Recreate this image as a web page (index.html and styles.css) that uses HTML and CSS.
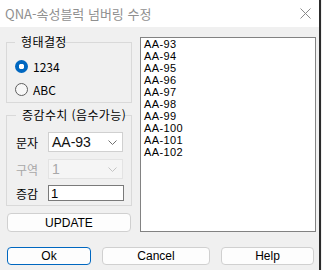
FILE: index.html
```html
<!DOCTYPE html>
<html lang="ko">
<head>
  <meta charset="UTF-8" />
  <title>QNA-속성블럭 넘버링 수정</title>
  <link rel="stylesheet" href="styles.css">
</head>
<body>
  <div class="window">
    <div class="titlebar">
      <span class="title">QNA-속성블럭 넘버링 수정</span>
      <svg class="close" viewBox="0 0 11 11">
        <path d="M0.5 0.5 L10.5 10.5 M10.5 0.5 L0.5 10.5" stroke="#8a8a8a" stroke-width="1" fill="none"/>
      </svg>
    </div>

    <div class="main">
      <div class="left">
        <fieldset class="group group-type">
          <legend>형태결정</legend>
          <div class="radio-row">
            <span class="radio checked"></span>
            <span class="radio-label">1234</span>
          </div>
          <div class="radio-row">
            <span class="radio"></span>
            <span class="radio-label">ABC</span>
          </div>
        </fieldset>

        <fieldset class="group group-step">
          <legend>증감수치 (음수가능)</legend>
          <div class="field-row">
            <span class="field-label">문자</span>
            <div class="combo">
              <span class="combo-text">AA-93</span>
              <svg class="chevron" viewBox="0 0 9 5">
                <path d="M0.5 0.5 L4.5 4.5 L8.5 0.5" stroke="#707070" stroke-width="1" fill="none"/>
              </svg>
            </div>
          </div>
          <div class="field-row">
            <span class="field-label disabled">구역</span>
            <div class="combo combo-disabled">
              <span class="combo-text">1</span>
              <svg class="chevron" viewBox="0 0 9 5">
                <path d="M0.5 0.5 L4.5 4.5 L8.5 0.5" stroke="#c4c4c4" stroke-width="1" fill="none"/>
              </svg>
            </div>
          </div>
          <div class="field-row field-row-last">
            <span class="field-label">증감</span>
            <input class="text-input" type="text" value="1">
          </div>
        </fieldset>

        <button class="btn btn-update">UPDATE</button>
      </div>

      <div class="listbox">
        <div class="item">AA-93</div>
        <div class="item">AA-94</div>
        <div class="item">AA-95</div>
        <div class="item">AA-96</div>
        <div class="item">AA-97</div>
        <div class="item">AA-98</div>
        <div class="item">AA-99</div>
        <div class="item">AA-100</div>
        <div class="item">AA-101</div>
        <div class="item">AA-102</div>
      </div>
    </div>

    <div class="actions">
      <button class="btn btn-ok">Ok</button>
      <button class="btn btn-cancel">Cancel</button>
      <button class="btn btn-help">Help</button>
    </div>
  </div>
</body>
</html>
```

FILE: styles.css
```css
body {
  margin: 0;
  background: #f0f0f0;
  font-family: "Noto Sans CJK KR", "Noto Sans", sans-serif;
  color: #000;
  overflow: hidden;
}

.window {
  width: 319px;
  height: 270px;
  background: #f0f0f0;
  border-right: 2px solid #2b2b2b;
  display: flex;
  flex-direction: column;
}

.titlebar {
  height: 27px;
  background: #fff;
  display: flex;
  align-items: center;
  justify-content: space-between;
  padding: 0 8px 0 5px;
  flex-shrink: 0;
}

.title {
  font-size: 13px;
  color: #8f8f8f;
  line-height: 27px;
}

.close {
  width: 11px;
  height: 11px;
}

.main {
  display: flex;
  align-items: flex-start;
  padding: 8px 0 0 6px;
}

.left {
  width: 126px;
  display: flex;
  flex-direction: column;
}

.group {
  margin: 0;
  border: 1px solid #d9d9d9;
  padding: 0;
  min-width: 0;
}

.group legend {
  font-size: 12px;
  line-height: 14px;
  letter-spacing: 0.4px;
  white-space: nowrap;
  padding: 0 2px;
  position: relative;
  left: 4px;
}

.group-type {
  padding: 6px 0 1px 8px;
}

.radio-row {
  height: 23px;
  display: flex;
  align-items: center;
  gap: 5px;
}

.radio {
  width: 11px;
  height: 11px;
  border: 1px solid #5f5f5f;
  border-radius: 50%;
  background: #f7f7f7;
}

.radio.checked {
  width: 13px;
  height: 13px;
  border: none;
  background: radial-gradient(circle, #fff 0 2.6px, #0067c0 3px);
}

.radio-label {
  font-size: 12px;
}

.group-step {
  margin-top: 5px;
  padding: 10px 0 4px 9px;
}

.field-row {
  display: flex;
  align-items: center;
  height: 20px;
  margin-bottom: 7px;
}

.field-row + .field-row + .field-row {
  margin-top: -1px;
}

.field-row-last {
  height: 16px;
  margin-bottom: 0;
}

.field-label {
  width: 32px;
  font-size: 12px;
}

.field-label.disabled {
  color: #a8a8a8;
}

.combo {
  width: 75px;
  height: 20px;
  box-sizing: border-box;
  border: 1px solid #d0d0d0;
  background: #fff;
  display: flex;
  align-items: center;
  justify-content: space-between;
  padding: 0 5px 0 3px;
}

.combo-text {
  font-family: "Liberation Sans", Arial, sans-serif;
  font-size: 14px;
  color: #111;
}

.combo-disabled {
  background: #f5f5f5;
  border-color: #e3e3e3;
}

.combo-disabled .combo-text {
  color: #a8a8a8;
}

.chevron {
  width: 9px;
  height: 5px;
}

.text-input {
  width: 76px;
  height: 16px;
  box-sizing: border-box;
  border: 1px solid #7a7a7a;
  background: #fff;
  margin: 0;
  padding: 0 2px;
  font-family: "Liberation Sans", Arial, sans-serif;
  font-size: 13px;
  outline: none;
}

.btn {
  font-family: "Liberation Sans", Arial, sans-serif;
  font-size: 12px;
  color: #000;
  background: #fdfdfd;
  border: 1px solid #d0d0d0;
  border-radius: 4px;
  padding: 0;
  margin: 0;
}

.btn-update {
  margin: 7px 0 0 1px;
  width: 124px;
  height: 19px;
}

.listbox {
  margin: 2px 0 0 8px;
  width: 176px;
  height: 195px;
  box-sizing: border-box;
  border: 1px solid #828282;
  background: #fff;
  padding: 0 0 0 3px;
  overflow: hidden;
}

.item {
  font-family: "Liberation Sans", Arial, sans-serif;
  font-size: 11px;
  letter-spacing: 0.4px;
  line-height: 12px;
}

.actions {
  display: flex;
  padding: 15px 0 0 7px;
}

.btn-ok {
  width: 84px;
  height: 18px;
  border-color: #0067c0;
}

.btn-cancel {
  margin-left: 11px;
  width: 108px;
  height: 18px;
}

.btn-help {
  margin-left: 11px;
  width: 93px;
  height: 18px;
}
```
